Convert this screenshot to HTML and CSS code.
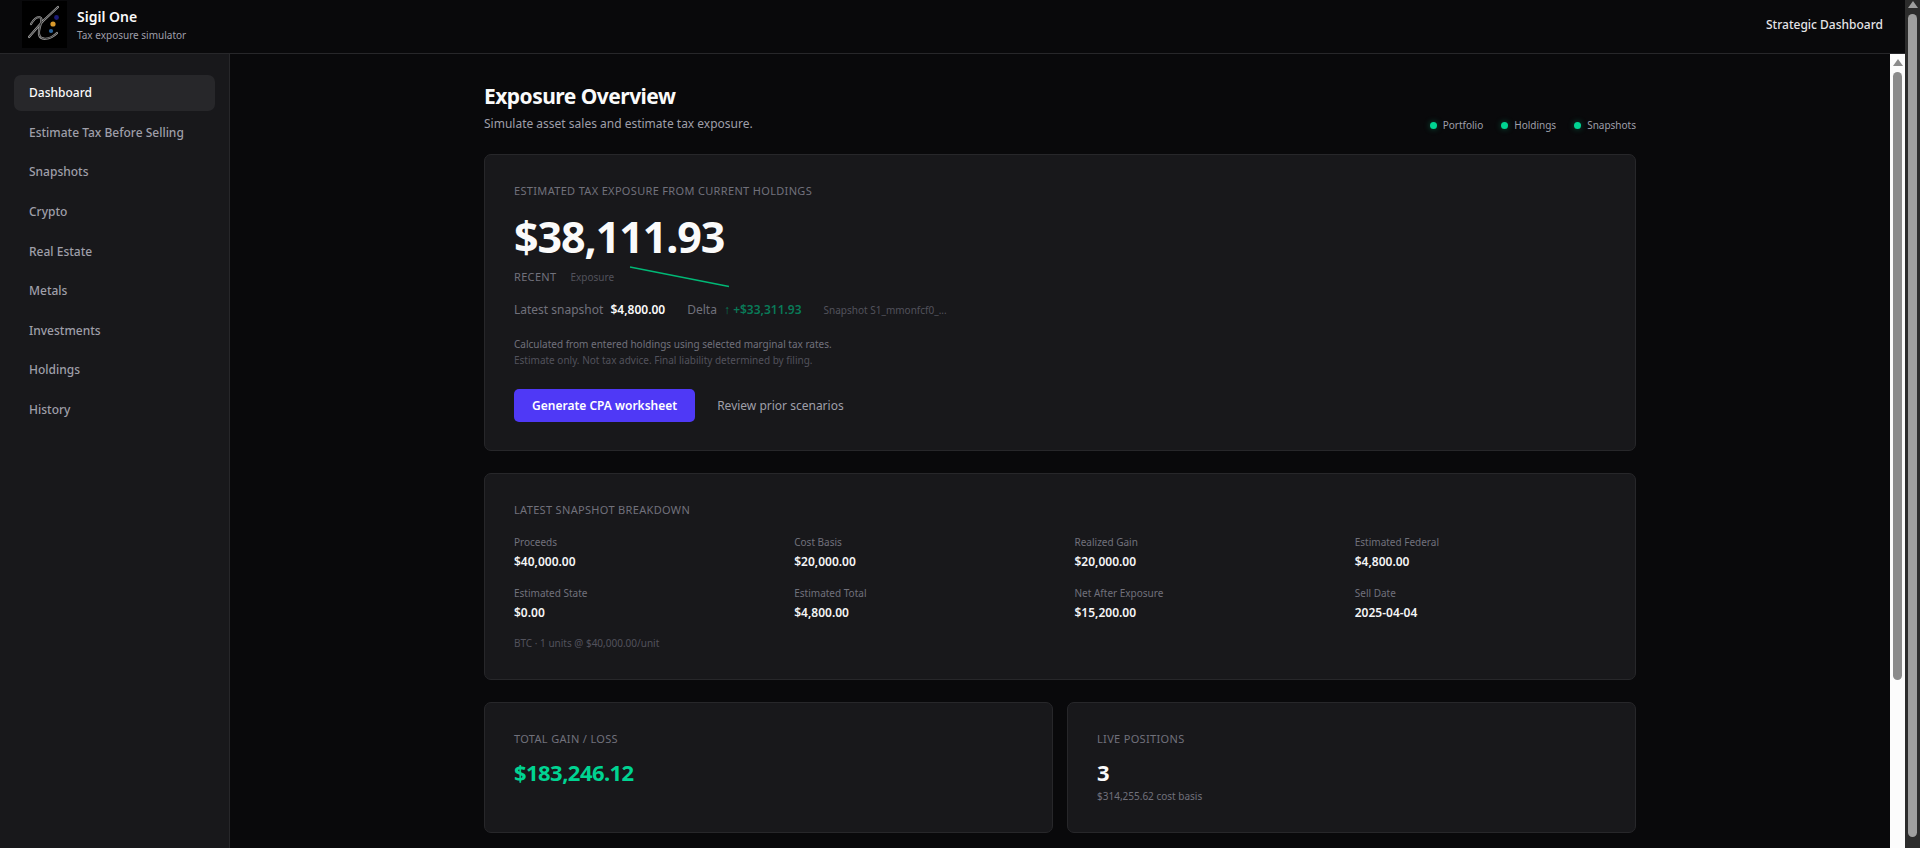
FILE: index.html
```
<!DOCTYPE html>
<html lang="en">
<head>
    <meta charset="utf-8">
    <meta name="viewport" content="width=device-width, initial-scale=1">
    <title>Sigil One</title>
    <link rel="stylesheet" href="styles.css">
</head>

<body>

<div class="page">
<div class="app">
	<header class="header">
		<svg class="logo" viewBox="0 0 45 47" aria-hidden="true">
			<rect width="45" height="47" fill="#000"/>
			<g fill="none" stroke-linecap="round" stroke-linejoin="round">
				<path stroke="#a0a0a0" stroke-width="2.2" d="M7 36 L21 20 L36 6 M9 23 C12 18 15 16 17 16 C23 17 16 26 17 33 C18 40 28 39 35 32"/>
				<path stroke="#222" stroke-width="0.8" d="M7 36 L21 20 L36 6 M9 23 C12 18 15 16 17 16 C23 17 16 26 17 33 C18 40 28 39 35 32"/>
			</g>
			<circle cx="34.5" cy="16.5" r="2.4" fill="#1b1b78"/>
			<circle cx="31" cy="23" r="2.6" fill="#d99a2b"/>
			<circle cx="29" cy="30" r="2.1" fill="#2a649c"/>
		</svg>
		<div class="brand">
			<strong>Sigil One</strong>
			<span>Tax exposure simulator</span>
		</div>
		<span class="mode">Strategic Dashboard</span>
	</header>

	<div class="body">
		<nav class="side">
			<ul>
				<li class="active"><a href="#">Dashboard</a></li>
				<li><a href="#">Estimate Tax Before Selling</a></li>
				<li><a href="#">Snapshots</a></li>
				<li><a href="#">Crypto</a></li>
				<li><a href="#">Real Estate</a></li>
				<li><a href="#">Metals</a></li>
				<li><a href="#">Investments</a></li>
				<li><a href="#">Holdings</a></li>
				<li><a href="#">History</a></li>
			</ul>
		</nav>

		<main class="main">
			<div class="wrap">
				<div class="top">
					<div>
						<h1>Exposure Overview</h1>
						<p>Simulate asset sales and estimate tax exposure.</p>
					</div>
					<ul class="status">
						<li>Portfolio</li>
						<li>Holdings</li>
						<li>Snapshots</li>
					</ul>
				</div>

				<!-- exposure -->
				<section class="card">
					<h2>Estimated tax exposure from current holdings</h2>
					<div class="total">$38,111.93</div>
					<div class="recent">
						<span class="cap">Recent</span>
						<span class="dim">Exposure</span>
						<svg class="spark" viewBox="0 0 104 22" aria-hidden="true"><path d="M2 1 L101 20.5" fill="none" stroke="#00b876" stroke-width="1.4"/></svg>
					</div>
					<div class="latest">
						<span>Latest snapshot <b>$4,800.00</b></span>
						<span>Delta <b class="up">↑ +$33,311.93</b></span>
						<span class="dim">Snapshot S1_mmonfcf0_...</span>
					</div>
					<div class="note">
						<p>Calculated from entered holdings using selected marginal tax rates.</p>
						<p class="dim">Estimate only. Not tax advice. Final liability determined by filing.</p>
					</div>
					<div class="actions">
						<button type="button">Generate CPA worksheet</button>
						<a href="#">Review prior scenarios</a>
					</div>
				</section>

				<!-- breakdown -->
				<section class="card">
					<h2>Latest snapshot breakdown</h2>
					<dl class="grid">
						<div><dt>Proceeds</dt><dd>$40,000.00</dd></div>
						<div><dt>Cost Basis</dt><dd>$20,000.00</dd></div>
						<div><dt>Realized Gain</dt><dd>$20,000.00</dd></div>
						<div><dt>Estimated Federal</dt><dd>$4,800.00</dd></div>
						<div><dt>Estimated State</dt><dd>$0.00</dd></div>
						<div><dt>Estimated Total</dt><dd>$4,800.00</dd></div>
						<div><dt>Net After Exposure</dt><dd>$15,200.00</dd></div>
						<div><dt>Sell Date</dt><dd>2025-04-04</dd></div>
					</dl>
					<p class="units dim">BTC · 1 units @ $40,000.00/unit</p>
				</section>

				<div class="pair">
					<section class="card">
						<h2>Total gain / loss</h2>
						<div class="num gain">$183,246.12</div>
					</section>
					<section class="card">
						<h2>Live positions</h2>
						<div class="num">3</div>
						<p class="basis">$314,255.62 cost basis</p>
					</section>
				</div>
			</div>
		</main>

		<div class="bar bar-light" aria-hidden="true"><i></i><b></b></div>
	</div>
</div>
<div class="bar bar-dark" aria-hidden="true"><i></i><b></b></div>
</div>

</body>
</html>
```
FILE: styles.css
```
*{ margin:0; padding:0; box-sizing:border-box;}
li{ list-style:none;}
a{ color:inherit; text-decoration:none;}

body{ background:#09090b; color:#fafafa; font:12px/20px "Noto Sans", "Open Sans", sans-serif;}

.page{ display:flex; height:100vh; overflow:hidden;}
.app{ display:flex; flex:1; flex-direction:column; min-width:0;}

/* header */
.header{ display:flex; align-items:center; padding:1px 22px 5px; border-bottom:1px solid #27272a;}
.logo{ width:45px; height:47px;}
.brand{ display:flex; flex:1; flex-direction:column; margin-left:10px; padding-top:2px; line-height:18px;}
.brand strong{ font-size:14px; font-weight:600;}
.brand span{ font-size:10px; color:#9f9fa9;}
.mode{ font-weight:500; color:#e4e4e7;}

.body{ display:flex; flex:1; min-height:0;}

/* left */
.side{ flex:none; width:230px; padding:21px 14px; background:#18181b; border-right:1px solid #27272a;}
.side ul{ display:flex; flex-direction:column; justify-content:space-between; height:353px;}
.side a{ display:block; padding:8px 15px; border-radius:7px; font-weight:500; color:#9f9fa9;}
.side .active a{ background:#27272a; color:#fafafa;}

/* main */
.main{ flex:1; min-width:0; padding:28px 22px; overflow:hidden;}
.wrap{ display:flex; flex-direction:column; gap:22px; max-width:1152px; margin:0 auto;}
.top{ display:flex; justify-content:space-between; align-items:flex-end; margin-bottom:-2px;}
.top h1{ margin-bottom:3px; font-size:21px; line-height:29px; font-weight:700; letter-spacing:-0.025em;}
.top p{ color:#9f9fa9;}
.status{ display:flex; gap:18px; font-size:10px; line-height:18px; color:#9f9fa9;}
.status li{ display:flex; align-items:center; gap:6px;}
.status li::before{ content:""; width:7px; height:7px; border-radius:50%; background:#00d492; box-shadow:0 0 6px rgba(0,212,146,.4);}

.card{ padding:29px 29px 28px; background:#18181b; border:1px solid #27272a; border-radius:7px;}
.card h2,.cap{ font-size:11px; line-height:14px; font-weight:400; letter-spacing:0.03em; text-transform:uppercase; color:#71717b;}
.dim{ color:#52525c;}

.total{ margin-top:14px; font-size:43px; line-height:50px; font-weight:700; letter-spacing:-0.025em;}
.recent{ display:flex; align-items:center; gap:14px; margin-top:4px; font-size:10px;}
.spark{ width:104px; height:22px;}
.latest{ display:flex; gap:22px; margin-top:12px; color:#71717b;}
.latest b{ margin-left:4px; font-weight:600; color:#fafafa;}
.latest .up{ color:#097a58;}
.latest .dim{ font-size:10px; color:#52525c;}
.note{ margin-top:16px; font-size:10px; line-height:16px; color:#71717b;}
.note .dim{ color:#52525c;}
.actions{ display:flex; align-items:center; gap:22px; margin-top:21px; color:#9f9fa9;}
.actions button{ height:33px; padding:0 18px; border:0; border-radius:5px; background:#4f39f6; color:#fff; font:inherit; font-weight:600; cursor:pointer;}

/* breakdown */
.grid{ display:grid; grid-template-columns:repeat(4,1fr); gap:14px 29px; margin-top:18px;}
.grid dt{ font-size:10px; line-height:14px; color:#71717b;}
.grid dd{ margin-top:3px; font-weight:600; color:#f4f4f5;}
.units{ margin-top:12px; font-size:10px; line-height:16px;}

.pair{ display:grid; grid-template-columns:1fr 1fr; gap:14px;}
.num{ margin-top:12px; font-size:22px; line-height:29px; font-weight:700; letter-spacing:-0.025em;}
.gain{ color:#00d492;}
.basis{ margin-top:1px; font-size:10px; line-height:16px; color:#71717b;}

/* scroll bars */
.bar{ display:flex; flex:none; flex-direction:column; align-items:center; width:15px;}
.bar i{ border:5px solid transparent; border-top:0; border-bottom:7px solid #8b8b8b;}
.bar b{ width:9px; margin-top:6px; border-radius:5px; background:#8b8b8b;}
.bar-light{ padding-top:5px; background:#fcfcfc;}
.bar-light b{ height:77%;}
.bar-dark{ padding-top:1px; background:#2c2c2c;}
.bar-dark i{ border-bottom-color:#9f9f9f;}
.bar-dark b{ flex:1; margin-bottom:11px; background:#9f9f9f;}
```
